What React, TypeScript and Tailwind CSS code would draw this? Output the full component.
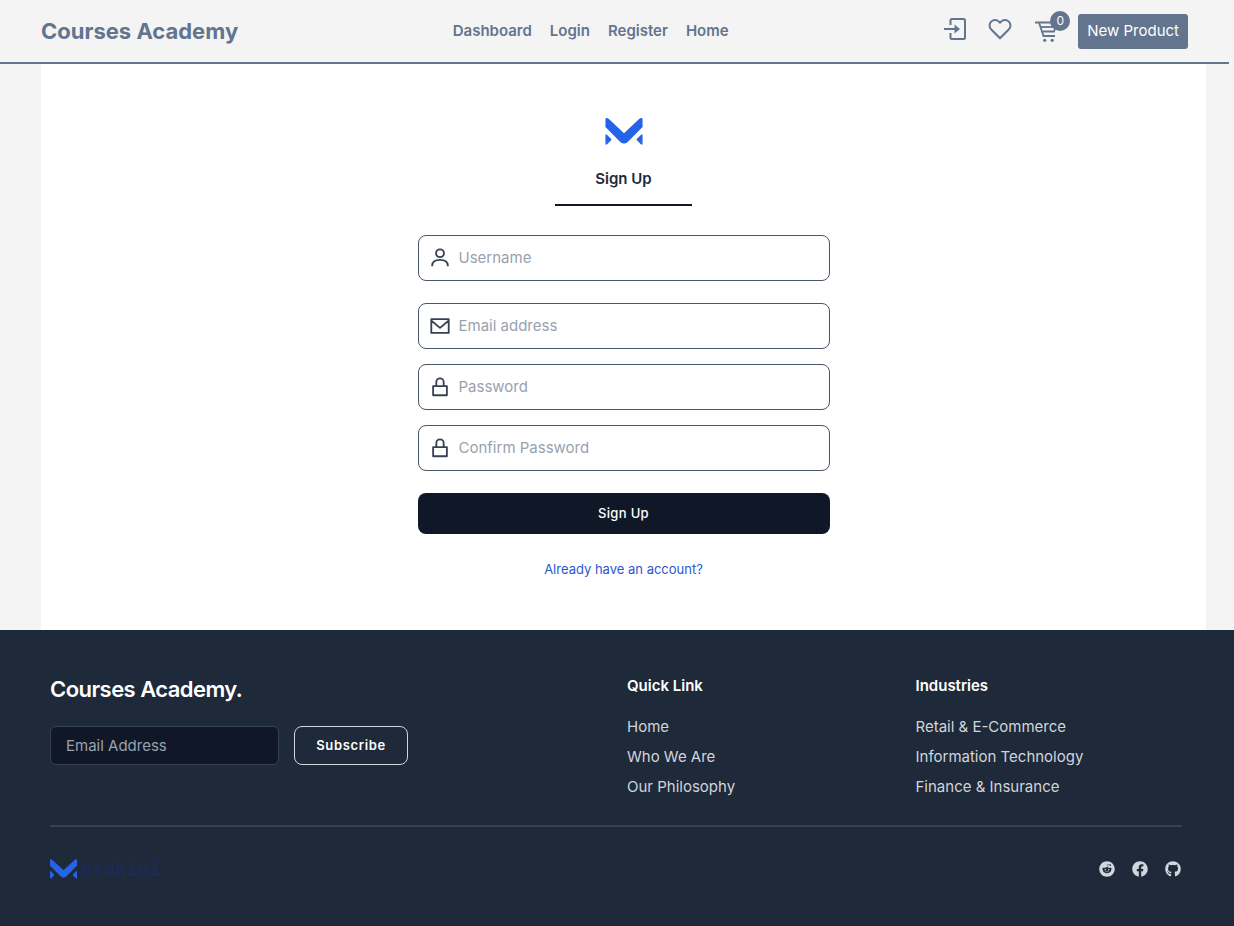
import type { ReactNode } from "react";
import { FiHeart } from "react-icons/fi";
import { FaFacebook, FaGithub, FaReddit } from "react-icons/fa";

function BrandMark({ className }: { className: string }) {
  return (
    <svg viewBox="0 0 110 80" className={className} fill="currentColor" aria-hidden="true">
      <path d="M3 0Q7 0 11 4L55 45L99 4Q103 0 107 0Q110 0 110 4V27L66 71Q55 80 44 71L0 27V4Q0 0 3 0Z" />
      <path d="M0 52Q0 46 5 50L16 61Q19 64 16 67L5 78Q0 81 0 76Z" />
      <path d="M110 52Q110 46 105 50L94 61Q91 64 94 67L105 78Q110 81 110 76Z" />
    </svg>
  );
}

function EnterIcon() {
  return (
    <svg viewBox="0 0 24 24" className="size-6" fill="none" stroke="currentColor" strokeWidth="2" aria-hidden="true">
      <path d="M7.500 8V3.500Q7.500 2 9 2H20.500Q22 2 22 3.500V20.500Q22 22 20.500 22H9Q7.500 22 7.500 20.500V16" />
      <path d="M1 12H13" />
      <path d="M11.500 7.500L17 12L11.500 16.500Z" fill="currentColor" stroke="none" />
    </svg>
  );
}

function CartIcon() {
  return (
    <svg viewBox="0 0 24 24" className="size-6" fill="none" stroke="currentColor" strokeWidth="1.800" aria-hidden="true">
      <path d="M1 3.500H23L20 12.500H8.500" />
      <path d="M5 3.500L9.500 17H21" />
      <path d="M7 8H21" />
      <circle cx="10.700" cy="21.300" r="1.600" fill="currentColor" stroke="none" />
      <circle cx="18.200" cy="21.300" r="1.600" fill="currentColor" stroke="none" />
    </svg>
  );
}

function FieldIcon({ children }: { children: ReactNode }) {
  return (
    <svg
      viewBox="0 0 24 24"
      className="pointer-events-none size-[22px] shrink-0 text-gray-700"
      fill="none"
      stroke="currentColor"
      strokeWidth="2"
      strokeLinejoin="round"
      aria-hidden="true"
    >
      {children}
    </svg>
  );
}

const userIcon = (
  <FieldIcon>
    <circle cx="12" cy="6.800" r="4.300" />
    <path d="M3.500 21v-.8C3.500 16 7 14 12 14S20.500 16 20.500 20.200V21" />
  </FieldIcon>
);
const mailIcon = (
  <FieldIcon>
    <path d="M2.500 4.500H21.500V19.500H2.500ZM3 6.500L12 14L21 6.500" />
  </FieldIcon>
);
const lockIcon = (
  <FieldIcon>
    <path d="M4.500 11H19.500V21H4.500ZM8 11V6.500a4 4 0 018 0V11" />
  </FieldIcon>
);

function Field({ id, type, label, icon }: { id: string; type: string; label: string; icon: ReactNode }) {
  return (
    <label
      htmlFor={id}
      className="flex h-[46px] items-center gap-2 rounded-lg border border-gray-600 bg-white pr-3 pl-[10px]"
    >
      {icon}
      <input
        id={id}
        type={type}
        aria-label={label}
        placeholder={label}
        className="w-full min-w-0 bg-transparent text-[15px] text-gray-700 outline-none placeholder:text-gray-400"
      />
    </label>
  );
}

function LinkColumn({ title, links }: { title: string; links: string[] }) {
  return (
    <div>
      <h2 className="text-[15px] leading-6 font-semibold text-white">{title}</h2>
      <ul className="mt-[18px] flex flex-col gap-2">
        {links.map((link) => (
          <li key={link} className="leading-[22px]">
            <a href="#" className="text-[15px] text-gray-300">
              {link}
            </a>
          </li>
        ))}
      </ul>
    </div>
  );
}

export default function App() {
  return (
    <div className="flex min-h-screen flex-col bg-[#f4f4f4] font-['Inter',sans-serif] text-[15px]">
      <header className="mr-[5px] flex h-16 items-center justify-between border-b-2 border-slate-500 pr-[41px] pl-[41px] text-slate-500">
        <a href="#" className="text-[22px] font-bold">
          Courses Academy
        </a>
        <nav className="flex gap-[18px] font-semibold">
          <a href="#">Dashboard</a>
          <a href="#">Login</a>
          <a href="#">Register</a>
          <a href="#">Home</a>
        </nav>
        <div className="flex items-center">
          <button aria-label="Log in" className="mr-[21px] pb-1">
            <EnterIcon />
          </button>
          <button aria-label="Favourites" className="mr-[22px] pb-1">
            <FiHeart className="size-6" />
          </button>
          <button aria-label="Cart" className="relative mr-5">
            <CartIcon />
            <span className="absolute -top-2 left-4 flex size-5 items-center justify-center rounded-full bg-slate-500 text-xs text-white">
              0
            </span>
          </button>
          <button className="h-[35px] rounded-[3px] bg-slate-500 px-[9px] text-white">New Product</button>
        </div>
      </header>

      <main className="mr-7 ml-[41px] bg-white pt-[54px] pb-[51px]">
        <form className="mx-auto flex w-full max-w-[412px] flex-col">
          <BrandMark className="mx-auto h-[27px] w-[38px] text-[#2563eb]" />
          <h1 className="mx-auto mt-[23px] w-1/3 border-b-2 border-gray-900 pb-[14px] text-center leading-[22px] font-semibold text-gray-800">
            Sign Up
          </h1>
          <div className="mt-[29px] mb-[22px]">
            <Field id="username" type="text" label="Username" icon={userIcon} />
          </div>
          <div className="flex flex-col gap-[15px]">
            <Field id="email" type="email" label="Email address" icon={mailIcon} />
            <Field id="password" type="password" label="Password" icon={lockIcon} />
            <Field id="confirm" type="password" label="Confirm Password" icon={lockIcon} />
          </div>
          <button
            type="button"
            className="mt-[22px] h-[41px] rounded-lg bg-gray-900 text-[13px] font-medium tracking-wide text-white"
          >
            Sign Up
          </button>
          <a href="#" className="mx-auto mt-[25px] text-[13px] leading-5 text-[#2b57cf]">
            Already have an account?
          </a>
        </form>
      </main>

      <footer className="grow bg-gray-800 pt-11 pr-[52px] pb-11 pl-[50px]">
        <div className="grid grid-cols-4 gap-[22px]">
          <div className="col-span-2">
            <h2 className="text-[22px] leading-[30px] font-semibold tracking-tight text-white">Courses Academy.</h2>
            <div className="mt-[22px] flex gap-[15px]">
              <input
                type="email"
                aria-label="Email Address"
                placeholder="Email Address"
                className="h-[39px] w-[229px] rounded-md border border-gray-700 bg-gray-900 px-[15px] text-gray-300 outline-none placeholder:text-gray-400"
              />
              <button className="h-[39px] w-[114px] rounded-lg border border-gray-300 text-[13px] font-semibold tracking-wider text-white">
                Subscribe
              </button>
            </div>
          </div>
          <LinkColumn title="Quick Link" links={["Home", "Who We Are", "Our Philosophy"]} />
          <LinkColumn
            title="Industries"
            links={["Retail & E-Commerce", "Information Technology", "Finance & Insurance"]}
          />
        </div>
        <hr className="mt-[27px] border-t-2 border-[#374151]" />
        <div className="mt-[30px] flex items-center justify-between">
          <a href="#" className="flex items-center gap-1 text-[#2563eb]">
            <BrandMark className="h-5 w-[27px]" />
            <span className="font-['DejaVu_Sans_Mono',monospace] text-[19px] leading-6 font-bold text-[#1b2a57]">
              erakiui
            </span>
          </a>
          <div className="flex gap-[17px] pr-px text-gray-300">
            <a href="#" aria-label="Reddit">
              <FaReddit className="size-4" />
            </a>
            <a href="#" aria-label="Facebook">
              <FaFacebook className="size-4" />
            </a>
            <a href="#" aria-label="GitHub">
              <FaGithub className="size-4" />
            </a>
          </div>
        </div>
      </footer>
    </div>
  );
}
